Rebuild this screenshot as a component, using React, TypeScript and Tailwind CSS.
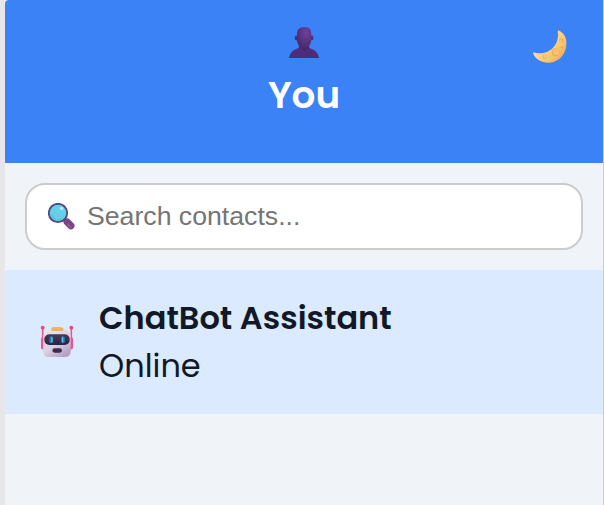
function PersonIcon() {
  return (
    <svg width="32" height="32" viewBox="0 0 32 32" aria-hidden="true">
      <defs>
        <linearGradient id="bust" x1="0" y1="0" x2="1" y2="1">
          <stop offset="0" stopColor="#4b2f83" />
          <stop offset="1" stopColor="#522a70" />
        </linearGradient>
        <radialGradient id="face" cx="0.65" cy="0.25" r="0.7">
          <stop offset="0" stopColor="#70419a" />
          <stop offset="1" stopColor="#4b2c72" />
        </radialGradient>
      </defs>
      <path d="M1 31C1.5 25 7 20.4 16 20.4S30.5 25 31 31Z" fill="url(#bust)" />
      <path d="M10.8 18H21.2V21.8Q16 25 10.8 21.8Z" fill="#46276b" />
      <ellipse cx="8.6" cy="11" rx="2" ry="2.4" fill="#4b2c74" />
      <ellipse cx="23.6" cy="11" rx="2" ry="2.4" fill="#582e77" />
      <path d="M9 7C9 2.5 11.5 0.3 15.5 0.3H17.5C21.3 0.3 23.2 2.7 23.2 7V12.5C23.2 17.6 20 21 16.1 21S9 17.6 9 12.5Z" fill="url(#face)" />
    </svg>
  );
}

function MoonIcon() {
  return (
    <svg width="36" height="34" viewBox="0 0 36 34" aria-hidden="true">
      <defs>
        <linearGradient id="moon" x1="0" y1="0.2" x2="0.9" y2="0.9">
          <stop offset="0.2" stopColor="#ffe0a0" />
          <stop offset="0.65" stopColor="#fccb72" />
          <stop offset="1" stopColor="#efa65b" />
        </linearGradient>
      </defs>
      <path d="M27.2 0.8C32 3.4 34.8 8 34.4 14.3C34 24.6 26.7 32.2 17.3 32.7C10 33 3.8 29.6 1 23.5C0.7 22.6 1.5 22.2 2.4 22.5C10 25 18.6 21.8 23 15.2C25.8 10.9 26.6 6 25.8 1.7C25.6 0.8 26.4 0.3 27.2 0.8Z" fill="url(#moon)" />
      <ellipse cx="23.6" cy="22.2" rx="3.8" ry="4.1" fill="#efac5b" transform="rotate(35 23.6 22.2)" />
      <ellipse cx="24.1" cy="21.7" rx="3" ry="3.3" fill="#fac46c" />
      <circle cx="12.6" cy="26.7" r="2.3" fill="#e9aa60" />
      <circle cx="12.9" cy="26.3" r="1.6" fill="#fac875" />
      <circle cx="29.2" cy="10.4" r="2.2" fill="#e9aa60" />
      <circle cx="28.9" cy="10.8" r="1.5" fill="#fac572" />
      <circle cx="30" cy="17.4" r="1.1" fill="#e9a85b" />
    </svg>
  );
}

function SearchIcon() {
  return (
    <svg width="28" height="28" viewBox="0 0 28 28" aria-hidden="true">
      <path d="M16 16.5L19 19.5" stroke="#554379" strokeWidth="3" />
      <path d="M19.2 19L22.9 22.7" stroke="#7b4484" strokeWidth="7.2" strokeLinecap="round" />
      <path d="M19.5 21.3L22.4 24" stroke="#955794" strokeWidth="2" strokeLinecap="round" />
      <circle cx="10" cy="10" r="9.2" fill="#65cfe8" stroke="#504783" strokeWidth="1.8" />
      <path d="M3.8 11.5A7 7 0 0 0 13.5 16.4" fill="none" stroke="#57badd" strokeWidth="1" />
      <circle cx="13.6" cy="5.4" r="1.7" fill="#b6edf8" />
    </svg>
  );
}

function RobotIcon() {
  return (
    <svg width="34" height="34" viewBox="0 0 34 34" aria-hidden="true">
      <defs>
        <linearGradient id="head" x1="0" y1="0" x2="0.7" y2="1">
          <stop offset="0" stopColor="#eeeaf0" />
          <stop offset="0.6" stopColor="#dbcfe3" />
          <stop offset="1" stopColor="#b5a0c5" />
        </linearGradient>
        <linearGradient id="visor" x1="0" y1="0" x2="0" y2="1">
          <stop offset="0" stopColor="#493954" />
          <stop offset="1" stopColor="#272444" />
        </linearGradient>
      </defs>
      <path d="M2.7 4V16M31.3 4V16" stroke="#ee568c" strokeWidth="1.6" />
      <circle cx="2.7" cy="2.7" r="1.9" fill="#f34472" />
      <circle cx="31.3" cy="2.7" r="1.9" fill="#f34472" />
      <rect x="1" y="12" width="5" height="12.5" rx="2" fill="#f4558c" />
      <rect x="28" y="12" width="5" height="12.5" rx="2" fill="#f0508c" />
      <path d="M3.2 11Q4.8 4 10.5 4H23.5Q29 4 30.7 11V26Q30.7 32 25 32H9Q3.2 32 3.2 26Z" fill="url(#head)" />
      <path d="M11.3 5V3.6Q11.6 2 13.6 2H20.5Q22.7 2 23.2 3.6V5Z" fill="#f8b940" />
      <path d="M11.6 5.2H23" stroke="#d98f3d" strokeWidth="0.8" />
      <rect x="4.3" y="9.2" width="25.4" height="10.8" rx="5" fill="url(#visor)" />
      <rect x="9.2" y="11.2" width="3.9" height="7" rx="1.8" fill="#2773b0" />
      <rect x="21" y="11.2" width="3.9" height="7" rx="1.8" fill="#2773b0" />
      <path d="M11.9 12.5V16.8M22.6 12.5V16.8" stroke="#4fc0f0" strokeWidth="1.3" strokeLinecap="round" />
      <rect x="12.4" y="23.3" width="9.5" height="4.4" rx="2.1" fill="#3c2e4d" />
    </svg>
  );
}

export default function App() {
  return (
    <div className="h-[505px] w-[604px] overflow-hidden bg-[#e7e7e9] pl-[5px] font-[Poppins,Inter,sans-serif] text-[#111827]">
      <aside className="flex h-full flex-col overflow-hidden rounded-tl-[4px] border-r border-[#cccccc] bg-[#f0f4f9]">
        <header className="grid h-[163px] shrink-0 grid-cols-[1fr_auto_1fr] bg-[#3b82f6]">
          <div className="col-start-2 flex flex-col items-center pt-[27px] text-white">
            <PersonIcon />
            <h1 className="mt-[14px] text-[37.33px] leading-[44px] font-semibold">You</h1>
          </div>
          <button aria-label="Toggle theme" className="mt-[30px] mr-[35px] self-start justify-self-end">
            <MoonIcon />
          </button>
        </header>

        <div className="px-5 py-5">
          <label className="flex h-[67px] items-center gap-[11px] rounded-[20px] border-2 border-[#cccccc] bg-white pl-[21px]">
            <SearchIcon />
            <input
              type="text"
              placeholder="Search contacts..."
              className="min-w-0 flex-1 bg-transparent font-['Liberation_Sans',Arial,sans-serif] text-[26.67px] outline-none placeholder:text-[#757575]"
            />
          </label>
        </div>

        <div className="flex h-[144px] shrink-0 items-center gap-[25px] bg-[#dbeafe] pl-[35px]">
          <RobotIcon />
          <div className="text-[32px] leading-[48px]">
            <p className="font-semibold">ChatBot Assistant</p>
            <p>Online</p>
          </div>
        </div>
      </aside>
    </div>
  );
}
